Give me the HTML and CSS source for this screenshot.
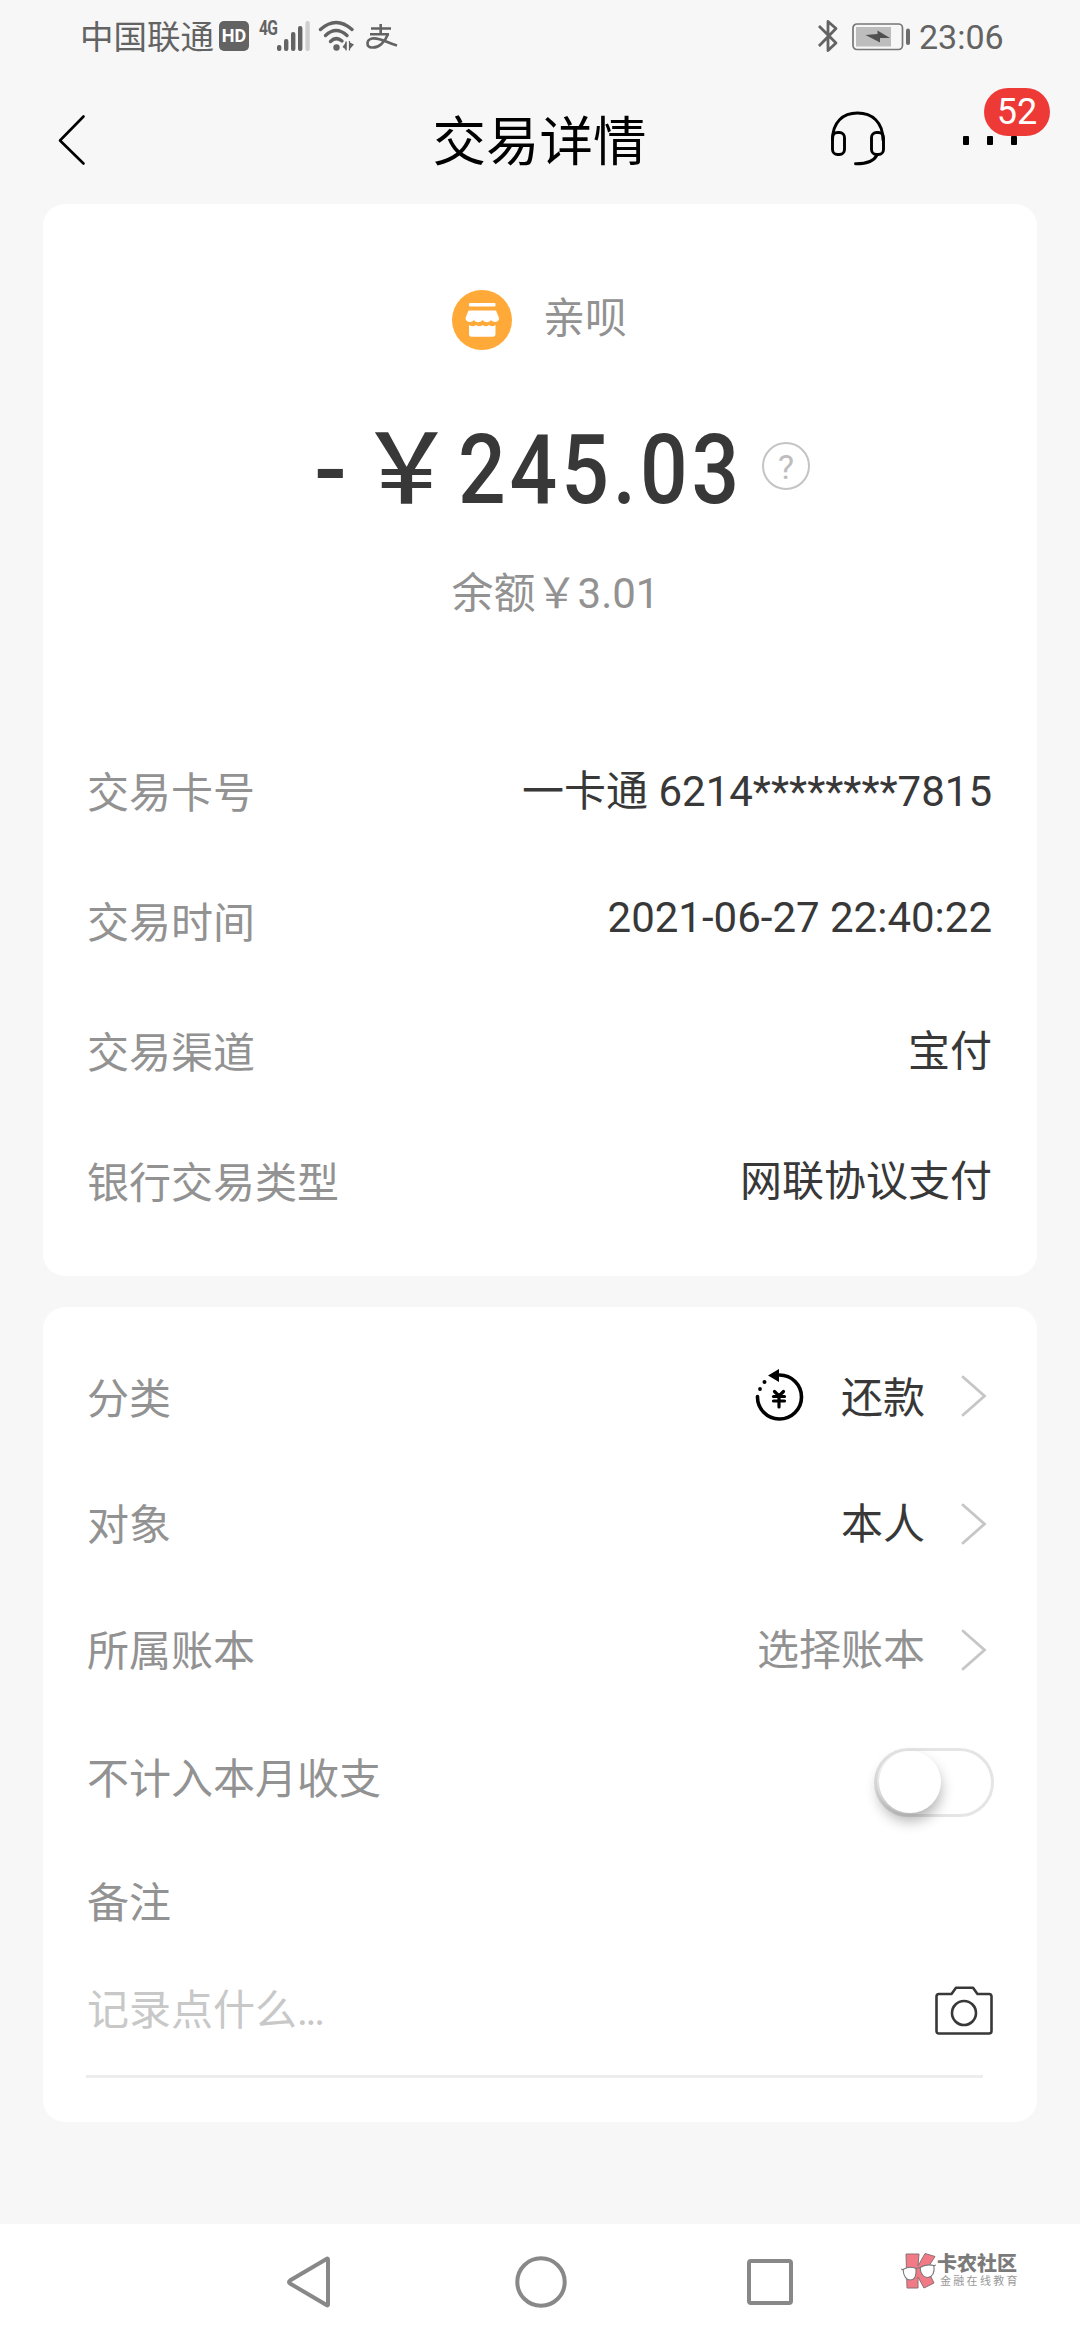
FILE: index.html
```html
<!DOCTYPE html>
<html lang="zh-CN">
<head>
  <meta charset="UTF-8">
  <title>交易详情</title>
  <link rel="stylesheet" href="styles.css">
</head>
<body>

  <!-- 状态栏 -->
  <div class="status-bar">
    <div class="status-left">
      <span class="carrier">中国联通</span>
      <span class="hd">HD</span>
      <span class="net">4G</span>
      <svg class="signal" width="34" height="32" viewBox="0 0 34 32">
        <g fill="#636363">
          <rect x="0" y="25" width="4.4" height="6" rx="2"/>
          <rect x="7" y="19" width="4.4" height="12" rx="2"/>
          <rect x="14" y="12" width="4.4" height="19" rx="2"/>
          <rect x="21" y="6" width="4.4" height="25" rx="2"/>
        </g>
        <rect x="28.4" y="1" width="4.4" height="30" rx="2" fill="#cfcfcf"/>
      </svg>
      <svg class="wifi" width="38" height="32" viewBox="0 0 38 32">
        <g fill="none" stroke="#636363" stroke-width="3.4" stroke-linecap="round">
          <path d="M2.5 9.5Q18 -4.5 34 9.5"/>
          <path d="M7.5 15.5Q18 5.5 29 15.5"/>
          <path d="M12.5 21.5Q18 16 24 21"/>
        </g>
        <circle cx="18.5" cy="27.5" r="3.2" fill="#636363"/>
        <path d="M24.5 27l4-5.5v8.5M31 22v8l5-5.5" fill="#636363"/>
        <path d="M28 21.5v9M31.5 21v9.5" stroke="#636363" stroke-width="1.2"/>
      </svg>
      <svg class="alipay" width="32" height="26" viewBox="0 0 32 26">
        <g fill="none" stroke="#636363" stroke-width="2.6">
          <path d="M5 4.5h20M14.7 0v10M4 10.2h19"/>
          <path d="M22 10C19 18 13 24 6 23.5C0 23 0 16 6 14.5C14 13 21 19 31 21.5"/>
        </g>
      </svg>
    </div>
    <div class="status-right">
      <svg class="bluetooth" width="22" height="34" viewBox="0 0 22 34">
        <path d="M2 7L19 24L11 31.5V2.5L19 9.5L2 27" fill="none" stroke="#636363" stroke-width="2.8" stroke-linejoin="round"/>
      </svg>
      <svg class="battery" width="60" height="28" viewBox="0 0 60 28">
        <rect x="1" y="1" width="49.5" height="25.5" rx="4" fill="none" stroke="#777" stroke-width="1.7"/>
        <rect x="4" y="4" width="35" height="19.5" fill="#bdbdbd"/>
        <path d="M13.5 12l12 -1V7.5l12.5 7.5h-10v4.5z" fill="#505050"/>
        <rect x="54" y="5.5" width="4" height="16.5" rx="2" fill="#6c6c6c"/>
      </svg>
      <span class="time">23:06</span>
    </div>
  </div>

  <!-- 标题栏 -->
  <div class="header">
    <svg class="back" width="30" height="52" viewBox="0 0 30 52">
      <path d="M26.5 2.5L3 26.5L26.5 49.5" fill="none" stroke="#000" stroke-width="2.6" stroke-linejoin="round" stroke-linecap="round"/>
    </svg>
    <h1>交易详情</h1>
    <div class="header-actions">
      <svg class="headset" width="56" height="56" viewBox="0 0 56 56">
        <g fill="none" stroke="#000" stroke-width="2.9" stroke-linecap="round">
          <path d="M2.5 29C2.5 11 13 2 27.5 2S53 11 53 29"/>
          <rect x="2.5" y="21.5" width="12" height="22" rx="5"/>
          <rect x="41.5" y="21.5" width="12" height="22" rx="5"/>
          <path d="M47 44C44 50 38 53 25.5 52.8"/>
        </g>
      </svg>
      <div class="more">
        <i></i><i></i><i></i>
        <span class="badge">52</span>
      </div>
    </div>
  </div>

  <!-- 交易信息 -->
  <div class="card">
    <div class="merchant">
      <svg width="60" height="60" viewBox="0 0 60 60">
        <circle cx="30" cy="30" r="30" fill="#ffa938"/>
        <g fill="#fff">
          <rect x="17" y="13" width="26.5" height="3.6" rx="1"/>
          <path d="M16.5 20.5h27.5l3 7.5c.5 4-5.5 5.500-8 2c-2 3-6 3-8.500 0c-2.500 3-6.500 3-8.500 0c-3 3.500-8.500 2-8.500-2z"/>
          <path d="M17 35q4 2.500 7 0q3.500 2.500 6.500 0q3.500 2.500 6.500 0q3 2.500 6.500 0v9q0 2.700-2.700 2.700H19.700Q17 46.700 17 44z"/>
        </g>
      </svg>
      <span>亲呗</span>
    </div>
    <div class="amount">
      <span class="minus">-</span>
      <span class="yen">￥</span>
      <span class="num">245.03</span>
      <span class="help">?</span>
    </div>
    <div class="balance">余额￥3.01</div>

    <div class="row"><span class="label">交易卡号</span><span class="value">一卡通 6214********7815</span></div>
    <div class="row"><span class="label">交易时间</span><span class="value date">2021-06-27 22:40:22</span></div>
    <div class="row"><span class="label">交易渠道</span><span class="value">宝付</span></div>
    <div class="row"><span class="label">银行交易类型</span><span class="value">网联协议支付</span></div>
  </div>

  <!-- 记账信息 -->
  <div class="card book">
    <div class="row">
      <span class="label">分类</span>
      <span class="value">
        <svg class="repay" width="50" height="54" viewBox="0 0 50 54">
          <path d="M2.5 27.5A22 22 0 1 0 24.5 6" fill="none" stroke="#000" stroke-width="3.6" stroke-linecap="round"/>
          <path d="M13 6.500L24 0v13z"/>
          <circle cx="9.5" cy="13" r="2"/><circle cx="5" cy="20" r="1.9"/>
          <path d="M19.5 22.5L24 27L28.5 22.5M24 27V38M18.5 27.5h11M18.5 32h11" fill="none" stroke="#000" stroke-width="3.2" stroke-linecap="round"/>
        </svg>
        还款
      </span>
      <svg class="arrow" width="26" height="42" viewBox="0 0 26 42"><path d="M2 2L23.5 21L2 40"/></svg>
    </div>
    <div class="row">
      <span class="label">对象</span>
      <span class="value">本人</span>
      <svg class="arrow low" width="26" height="42" viewBox="0 0 26 42"><path d="M2 2L23.5 21L2 40"/></svg>
    </div>
    <div class="row">
      <span class="label">所属账本</span>
      <span class="value gray">选择账本</span>
      <svg class="arrow low" width="26" height="42" viewBox="0 0 26 42"><path d="M2 2L23.5 21L2 40"/></svg>
    </div>
    <div class="row switch-row">
      <span class="label">不计入本月收支</span>
      <span class="switch"></span>
    </div>
    <div class="row remark-row"><span class="label">备注</span></div>
    <div class="note">
      <span>记录点什么<span class="dots">...</span></span>
      <svg width="58" height="49" viewBox="0 0 58 49">
        <g fill="none" stroke="#383838" stroke-width="2.6" stroke-linejoin="round">
          <path d="M4 8h12.5l4.5-6.3h17l4.5 6.3H54q2.5 0 2.5 2.5v34.5q0 2.5-2.5 2.5H4q-2.5 0-2.5-2.5V10.5Q1.5 8 4 8z"/>
          <circle cx="29" cy="27" r="12"/>
        </g>
      </svg>
    </div>
  </div>

  <!-- 系统导航键 -->
  <div class="navbar">
    <svg class="nav-back" width="46" height="54" viewBox="0 0 46 54">
      <path d="M42 4.5V49.5Q42 51 40.5 50L4 28.5Q2 27 4 25.5L40.5 4Q42 3 42 4.5z"/>
    </svg>
    <svg class="nav-home" width="54" height="54" viewBox="0 0 54 54"><circle cx="27" cy="27" r="23.7"/></svg>
    <svg class="nav-recent" width="48" height="48" viewBox="0 0 48 48"><rect x="3" y="3" width="42" height="42" rx="2"/></svg>
    <div class="logo">
      <svg width="36" height="38" viewBox="0 0 36 38">
        <g fill="#f27a86" stroke="#8b7074" stroke-width="1">
          <path d="M5 2h13l-1 12L24 1.500l10 3L26 17l7 14-10 5-6-11v11H6z"/>
        </g>
        <g fill="#fff" stroke="#777" stroke-width="1.1">
          <path d="M2 17.5q7-4 13-1q1 11-5.5 11.5Q3 28 2 17.5z"/>
          <path d="M19 15.5q6-4 14-2q1 11-6 12Q20 25.5 19 15.5z"/>
        </g>
        <path d="M14 17q3-2 6-1M0 17l3 1M32 14l3-1" fill="none" stroke="#777"/>
      </svg>
      <div>
        <b>卡农社区</b>
        <small>金融在线教育</small>
      </div>
    </div>
  </div>

</body>
</html>
```
FILE: styles.css
```css
* {
  box-sizing: border-box;
}

body {
  margin: 0;
  width: 1080px;
  height: 2340px;
  display: flex;
  flex-direction: column;
  background-color: #f7f7f7;
  font-family: Roboto, "Noto Sans CJK SC", sans-serif;
  font-size: 42px;
  line-height: 60px;
  color: #383838;
  overflow: hidden;
}

svg {
  display: block;
  flex: none;
}

/* 状态栏 */
.status-bar {
  height: 74px;
  padding: 0 76px 0 80px;
  display: flex;
  justify-content: space-between;
  color: #636363;
}

.status-left,
.status-right {
  display: flex;
  align-items: center;
  height: 74px;
}

.carrier {
  font-size: 33.5px;
  width: 139px;
  padding-top: 2px;
  white-space: nowrap;
}

.hd {
  width: 30px;
  height: 30px;
  margin-top: -2px;
  border-radius: 5px;
  background-color: #636363;
  color: #fff;
  font-size: 18px;
  font-weight: bold;
  line-height: 30px;
  text-align: center;
}

.net {
  width: 18px;
  margin: -19px 0 0 10px;
  font-size: 20px;
  font-weight: bold;
  line-height: 20px;
  letter-spacing: -1px;
  transform: scaleX(.78);
  transform-origin: left;
}

.signal {
  margin-top: -3px;
}

.wifi {
  margin: -2px 0 0 7px;
}

.alipay {
  margin: -1px 0 0 10px;
}

.bluetooth {
  margin: -2px 13px 0 0;
}

.battery {
  margin-right: 7px;
}

.time {
  width: 85px;
  font-size: 34px;
}

/* 标题栏 */
.header {
  height: 130px;
  padding: 0 58px 0 57px;
  display: grid;
  grid-template-columns: 1fr auto 1fr;
  align-items: center;
}

.back {
  margin-top: 1px;
}

h1 {
  margin: 8px 0 0;
  font-size: 53.5px;
  font-weight: normal;
  line-height: 70px;
  color: #000;
}

.header-actions {
  display: flex;
  justify-content: flex-end;
  align-items: center;
}

.more {
  position: relative;
  display: flex;
  gap: 18px;
  margin: 2px 5px 0 77px;
}

.more i {
  width: 6px;
  height: 9px;
  border-radius: 1px;
  background-color: #000;
}

.badge {
  position: absolute;
  left: 21px;
  top: -48px;
  width: 66px;
  height: 48px;
  border-radius: 24px;
  background-color: #ee3a37;
  color: #fff;
  font-size: 36px;
  line-height: 48px;
  text-align: center;
}

/* 白色卡片 */
.card {
  width: 994px;
  height: 1072px;
  margin: 0 0 31px 43px;
  padding: 86px 45px 0 44px;
  background-color: #fff;
  border-radius: 22px;
  flex: none;
}

.merchant {
  height: 60px;
  display: flex;
  align-items: center;
  justify-content: center;
  gap: 31px;
  color: #929292;
}

.merchant span {
  margin-top: -2px;
}

/* 金额 */
.amount {
  display: flex;
  align-items: center;
  height: 70px;
  margin: 84px 0 0 227px;
  font-size: 97px;
  font-weight: 500;
  line-height: 70px;
}

.minus {
  width: 44px;
  margin-top: 1px;
}

.yen {
  width: 97px;
  margin-top: 1px;
}

.num {
  width: 304px;
  margin: 1px 0 0 3px;
  letter-spacing: 4.5px;
  transform: scaleX(.865);
  transform-origin: left;
}

.help {
  width: 48px;
  height: 48px;
  margin-top: -6px;
  border: 2px solid #c4c4c4;
  border-radius: 50%;
  color: #bdbdbd;
  font-size: 34px;
  font-weight: 400;
  line-height: 46px;
  text-align: center;
}

.balance {
  height: 60px;
  margin: 60px 0 105px;
  padding-left: 32px;
  text-align: center;
  color: #929292;
}

.row {
  height: 130px;
  display: flex;
  align-items: center;
}

.label {
  flex: 1;
  color: #929292;
}

.value {
  display: flex;
  align-items: center;
  padding-bottom: 4px;
}

.date {
  padding-bottom: 12px;
}

.gray {
  color: #929292;
}

/* 记账卡片 */
.book {
  height: 815px;
  margin-bottom: 102px;
  padding: 30px 43px 0 44px;
}

.book .row {
  height: 126px;
}

.book .value {
  padding-bottom: 3px;
}

.repay {
  margin: -6px 36px 0 0;
}

.arrow {
  margin: -9px 7px 0 36px;
}

.arrow.low {
  margin-top: -4px;
}

.arrow path {
  fill: none;
  stroke: #c6c6c6;
  stroke-width: 2.8;
  stroke-linecap: round;
}

.book .switch-row {
  height: 130px;
}

.switch {
  width: 120px;
  height: 69px;
  margin-top: 5px;
  padding: 0 2px;
  border: 3px solid #e5e5e5;
  border-radius: 35px;
}

.switch::before {
  content: "";
  display: block;
  width: 62px;
  height: 62px;
  border-radius: 50%;
  background-color: #fff;
  box-shadow: 0 8px 14px rgba(0, 0, 0, .3);
}

.book .remark-row {
  height: 118px;
}

.note {
  height: 115px;
  width: 897px;
  margin-left: -1px;
  padding: 0 0 17px 1px;
  border-bottom: 3px solid #ededed;
  display: flex;
  align-items: center;
  justify-content: space-between;
  color: #c8c8c8;
}

.note .dots {
  letter-spacing: -2.5px;
}

.note svg {
  margin: -1px -10px 0 0;
}

/* 底部导航键 */
.navbar {
  height: 116px;
  padding: 0 62px 0 286px;
  display: flex;
  align-items: center;
  background-color: #fff;
}

.navbar > svg {
  fill: none;
  stroke: #888;
  stroke-width: 4;
}

.nav-home {
  margin-left: 182px;
}

.nav-recent {
  margin-left: 178px;
}

.logo {
  display: flex;
  align-items: center;
  margin: -22px 0 0 107px;
  color: #7b7b7b;
}

.logo b,
.logo small {
  display: block;
  white-space: nowrap;
}

.logo b {
  font-size: 20px;
  font-weight: 900;
  line-height: 22px;
}

.logo small {
  padding-left: 3px;
  font-size: 11px;
  line-height: 14px;
  letter-spacing: 2.3px;
  color: #999;
}
```
